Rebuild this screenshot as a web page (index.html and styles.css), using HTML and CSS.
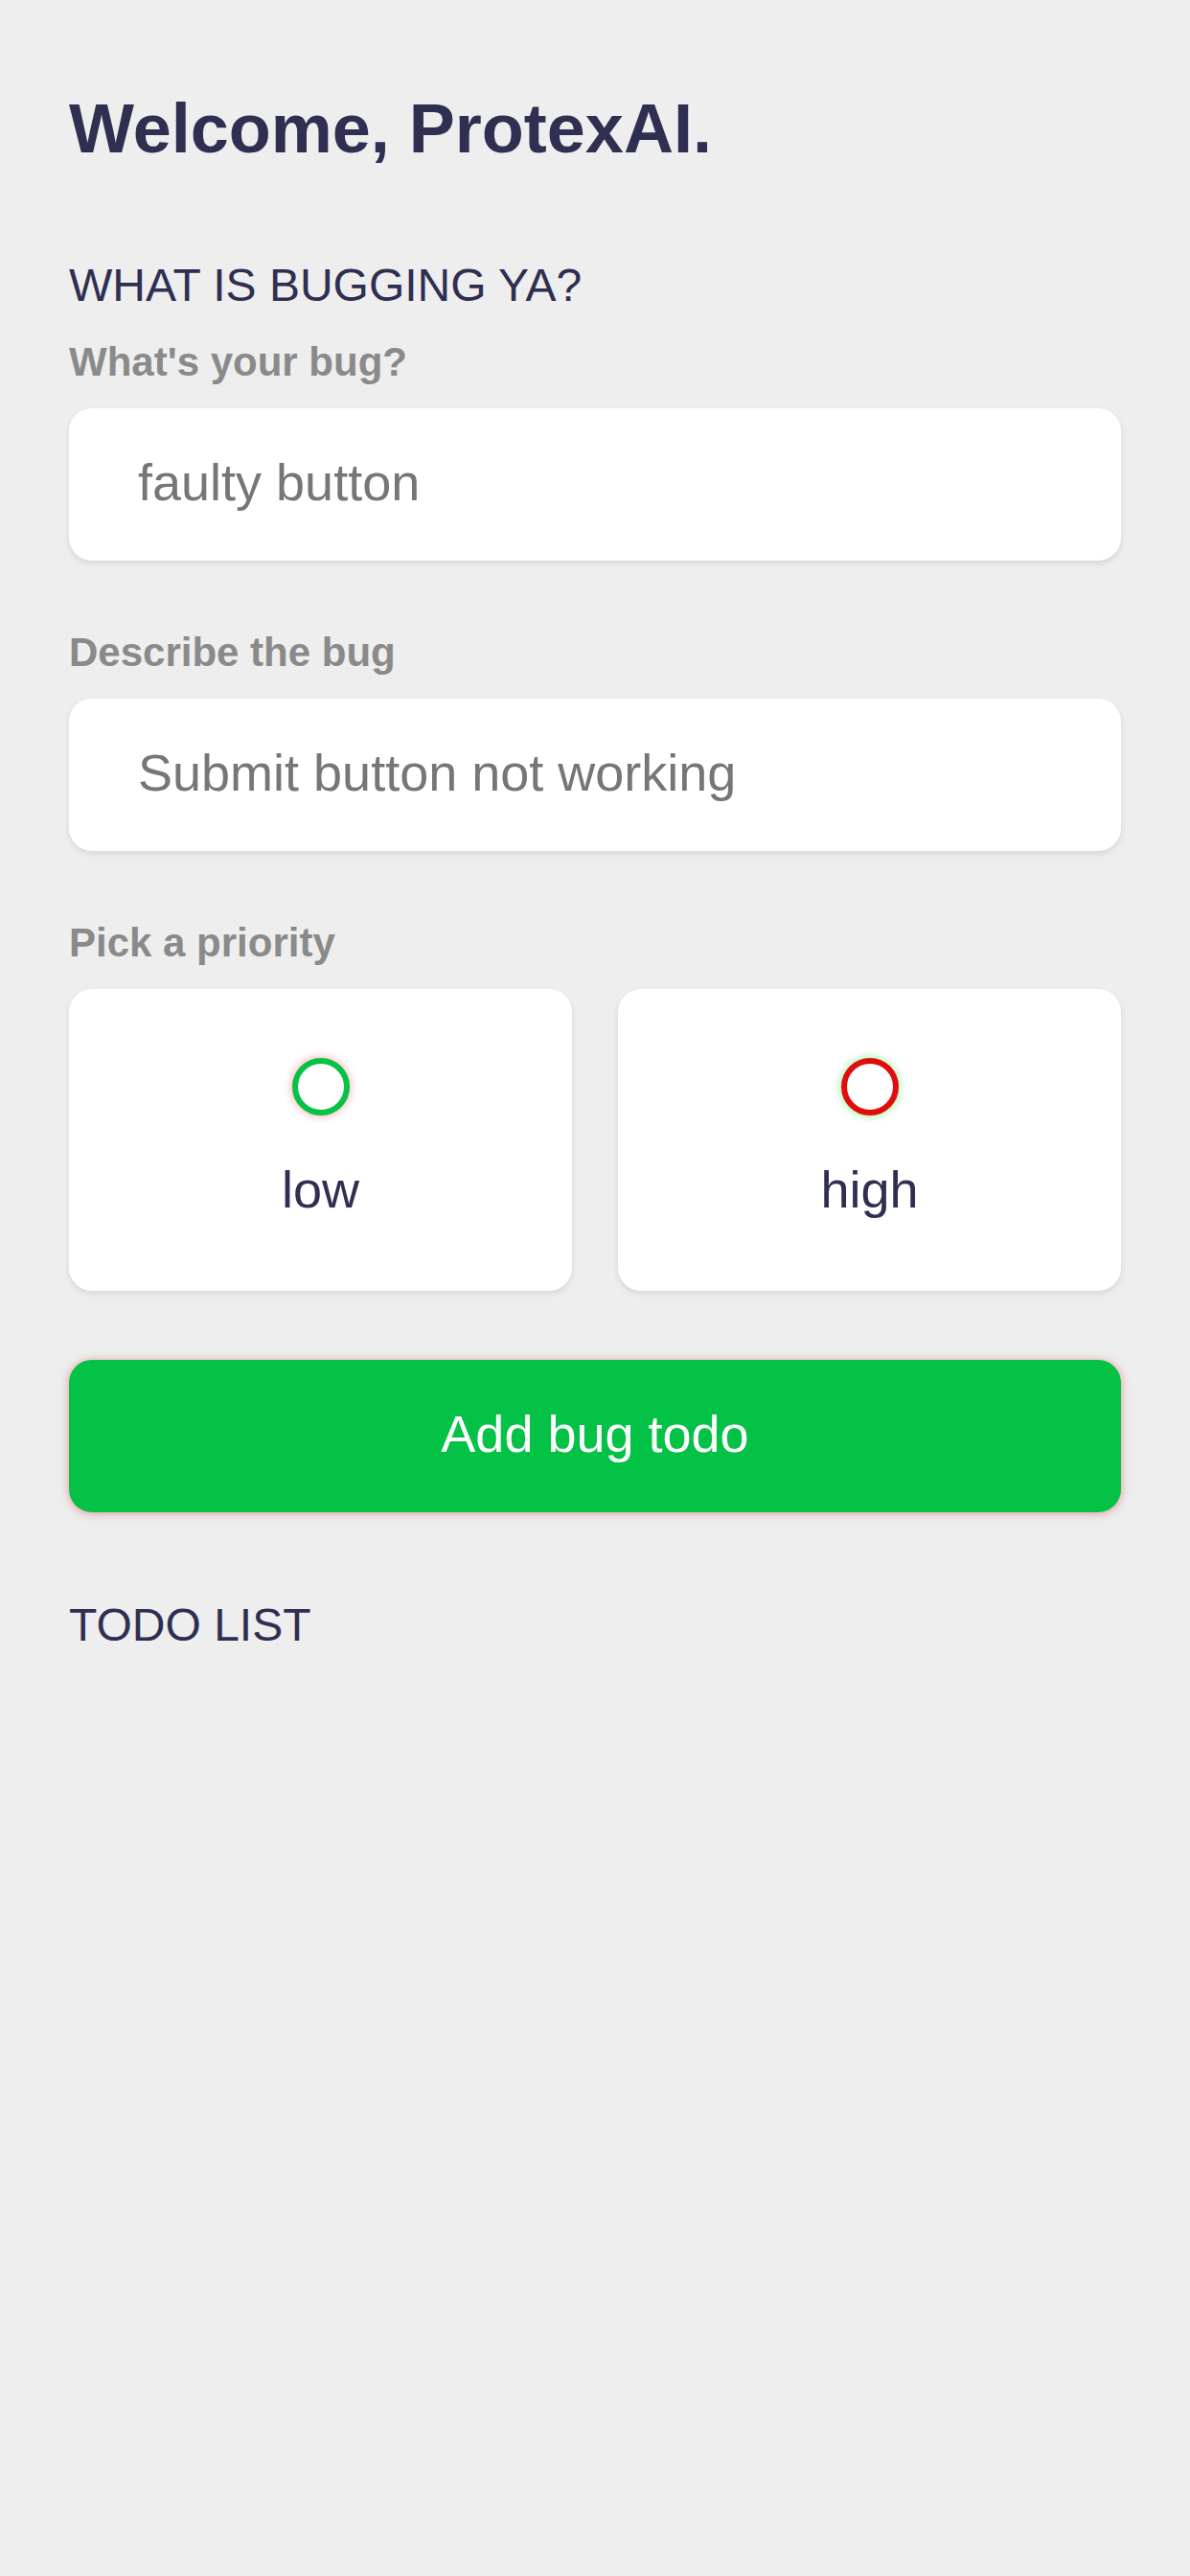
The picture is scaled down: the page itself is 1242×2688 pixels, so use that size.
FILE: index.html
```html
<!DOCTYPE html>
<html lang="en">
<head>
<meta charset="utf-8">
<title>Bug todo</title>
<link rel="stylesheet" href="styles.css">
</head>
<body>
<main class="page">
  <h1 class="title">Welcome, ProtexAI.</h1>
  <h2 class="section-heading">WHAT IS BUGGING YA?</h2>

  <label class="field-label first">What's your bug?</label>
  <div class="input-box"><span class="input-text">faulty button</span></div>

  <label class="field-label">Describe the bug</label>
  <div class="input-box"><span class="input-text">Submit button not working</span></div>

  <label class="field-label">Pick a priority</label>
  <div class="priority-row">
    <div class="priority-card">
      <span class="radio radio-low"></span>
      <span class="priority-text">low</span>
    </div>
    <div class="priority-card">
      <span class="radio radio-high"></span>
      <span class="priority-text">high</span>
    </div>
  </div>

  <button class="add-button">Add bug todo</button>

  <h2 class="section-heading todo-heading">TODO LIST</h2>
</main>
</body>
</html>
```
FILE: styles.css
```css
html, body {
  margin: 0;
  padding: 0;
}
body {
  background: #eeeeee;
  font-family: "Liberation Sans", Arial, sans-serif;
  width: 1242px;
  min-height: 2688px;
}
.page {
  padding: 93px 72px 0 72px;
  display: flex;
  flex-direction: column;
}
.title {
  margin: 0;
  font-size: 72px;
  line-height: 83px;
  font-weight: 700;
  color: #2f2f52;
}
.section-heading {
  margin: 94px 0 0 0;
  font-size: 48px;
  line-height: 56px;
  font-weight: 400;
  color: #2f2f52;
}
.field-label {
  display: block;
  margin-top: 72px;
  font-size: 42px;
  line-height: 48px;
  font-weight: 700;
  color: #8a8a8a;
}
.field-label.first {
  margin-top: 28px;
}
.input-box {
  margin-top: 24px;
  height: 159px;
  box-sizing: border-box;
  background: #ffffff;
  border-radius: 24px;
  box-shadow: 0 3px 6px rgba(0, 0, 0, 0.10);
  display: flex;
  align-items: center;
  padding: 0 72px 5px 72px;
}
.input-text {
  font-size: 54px;
  line-height: 62px;
  color: #767676;
}
.priority-row {
  margin-top: 24px;
  display: grid;
  grid-template-columns: 1fr 1fr;
  gap: 48px;
}
.priority-card {
  background: #ffffff;
  border-radius: 24px;
  box-shadow: 0 3px 6px rgba(0, 0, 0, 0.10);
  height: 315px;
  box-sizing: border-box;
  padding-top: 72px;
  display: flex;
  flex-direction: column;
  align-items: center;
}
.radio {
  display: block;
  width: 60px;
  height: 60px;
  box-sizing: border-box;
  border-radius: 50%;
  border: 6px solid;
  background: #ffffff;
}
.radio-low {
  border-color: #04c245;
  box-shadow: 0 0 10px rgba(230, 40, 40, 0.45);
}
.radio-high {
  border-color: #e00d0d;
  box-shadow: 0 0 10px rgba(40, 220, 40, 0.55);
}
.priority-text {
  margin-top: 46px;
  font-size: 54px;
  line-height: 62px;
  color: #2f2f52;
}
.add-button {
  margin-top: 72px;
  height: 159px;
  box-sizing: border-box;
  border: none;
  border-radius: 24px;
  background: #04c245;
  color: #ffffff;
  font-family: "Liberation Sans", Arial, sans-serif;
  font-size: 54px;
  line-height: 62px;
  padding: 0 0 5px 0;
  box-shadow: 0 1px 10px rgba(220, 60, 60, 0.5);
}
.todo-heading {
  margin-top: 90px;
}
```
